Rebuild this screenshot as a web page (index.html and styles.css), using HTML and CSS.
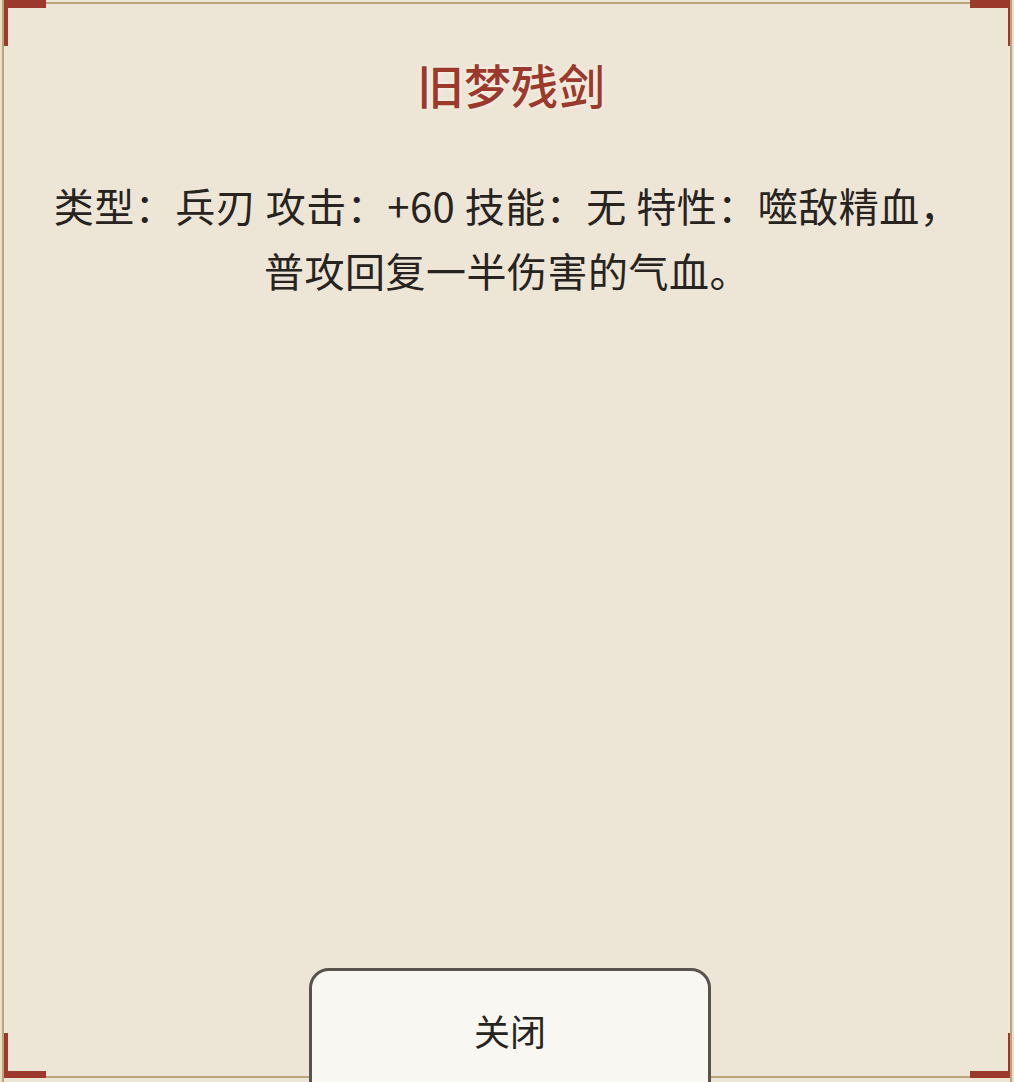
FILE: index.html
```html
<!DOCTYPE html>
<html lang="zh-CN">
<head>
    <meta charset="UTF-8">
    <meta name="viewport" content="width=device-width, initial-scale=1.0">
    <title>旧梦残剑</title>
    <link rel="stylesheet" href="styles.css">
</head>
<body>
    <div class="panel">
        <span class="corner tl"></span>
        <span class="corner tr"></span>
        <span class="corner bl"></span>
        <span class="corner br"></span>

        <h1 class="item-name">旧梦残剑</h1>
        <p class="item-desc">类型：兵刃&nbsp;攻击：+60&nbsp;技能：无&nbsp;特性：噬敌精血，<br>普攻回复一半伤害的气血。</p>

        <button class="close-btn">关闭</button>
    </div>
</body>
</html>
```

FILE: styles.css
```css
html, body {
    margin: 0;
    padding: 0;
}
body {
    font-family: "Noto Sans CJK SC", "Noto Sans", sans-serif;
    background-color: #e9dfca;
    color: #27231f;
    overflow: hidden;
}
.panel {
    position: relative;
    box-sizing: border-box;
    height: 1082px;
    margin: 0 2px;
    border-left: 2px solid #b9a577;
    border-right: 2px solid #b9a577;
    background-color: #ede5d6;
    display: flex;
    flex-direction: column;
    align-items: center;
    padding-top: 52px;
    overflow: hidden;
}
.panel::before {
    content: "";
    position: absolute;
    left: 0;
    right: 0;
    top: 2px;
    bottom: 4px;
    border-top: 2px solid #b9a577;
    border-bottom: 2px solid #b9a577;
    pointer-events: none;
}
.corner {
    position: absolute;
    width: 38px;
    height: 38px;
    border-color: #9b3a2c;
    border-style: solid;
    border-width: 0;
    z-index: 2;
}
.corner.tl {
    top: 0;
    left: -3px;
    border-top-width: 8px;
    border-left-width: 7px;
}
.corner.tr {
    top: 0;
    right: -3px;
    border-top-width: 8px;
    border-right-width: 5px;
}
.corner.bl {
    bottom: 4px;
    left: -3px;
    border-bottom-width: 7px;
    border-left-width: 7px;
}
.corner.br {
    bottom: 4px;
    right: -3px;
    border-bottom-width: 7px;
    border-right-width: 5px;
}
.item-name {
    margin: 0 0 0 8px;
    font-size: 47px;
    line-height: 64px;
    font-weight: 500;
    color: #9b3a2c;
    text-shadow: 0 0 4px #fbf7ee;
}
.item-desc {
    margin: 57px 0 0;
    padding: 0 40px;
    font-size: 40px;
    line-height: 65px;
    letter-spacing: 0.5px;
    text-align: center;
    white-space: nowrap;
}
.close-btn {
    margin-top: auto;
    margin-bottom: -40px;
    margin-left: 6px;
    width: 402px;
    height: 154px;
    flex-shrink: 0;
    box-sizing: border-box;
    padding-bottom: 32px;
    font-family: inherit;
    font-size: 36px;
    color: #27231f;
    background-color: #f9f7f2;
    border: 3px solid #58534d;
    border-radius: 20px;
    z-index: 1;
}
```
